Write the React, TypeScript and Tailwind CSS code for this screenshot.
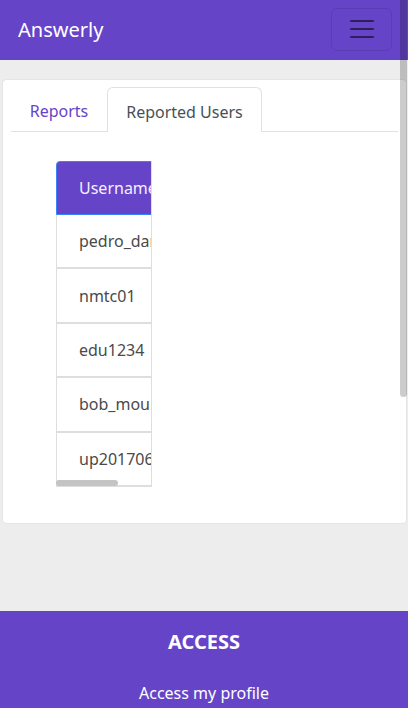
import React from "react";

const users = ["pedro_dantas", "nmtc01", "edu1234", "bob_mountain", "up201706000"];

const Navbar = () => (
  <nav className="h-[60px] shrink-0 bg-[#6644c8] flex items-center justify-between pl-[18px] pr-[16px]">
    <span className="text-white text-[20px] leading-none">Answerly</span>
    <button className="w-[61px] h-[43px] mt-[-2px] rounded-[6px] border border-black/10 flex items-center justify-center">
      <svg width="30" height="30" viewBox="0 0 30 30">
        <path d="M4 7h22M4 15h22M4 23h22" stroke="rgba(0,0,0,0.55)" strokeWidth="2" strokeLinecap="round" />
      </svg>
    </button>
  </nav>
);

const Tabs = () => (
  <div className="flex items-end border-b border-[#dee2e6] h-[45px]">
    <div className="w-[96px] h-[44px] pt-[3px] flex items-center justify-center text-[#6644c8] text-[16px]">Reports</div>
    <div className="w-[155px] h-[45px] pt-[3px] mb-[-1px] flex items-center justify-center text-[#495057] text-[16px] bg-white border border-b-0 border-[#dee2e6] rounded-t-[6px]">
      Reported Users
    </div>
  </div>
);

const UsersTable = () => (
  <div className="relative w-[96px] ml-[45px] mt-[29px] overflow-hidden">
    <div className="w-[160px]">
      <div className="h-[54px] bg-[#6644c8] border border-[#3b82f6] rounded-t-[4px] flex items-center pl-[22px] text-[16px] text-[#f4f0ff]">
        Username
      </div>
      {users.map((u, i) => (
        <div
          key={i}
          className="h-[54.4px] border-x border-b-2 border-[#dedede] flex items-center pl-[22px] text-[16px] text-[#4a4a4a] whitespace-nowrap"
        >
          {u}
        </div>
      ))}
    </div>
    <div className="absolute left-0 right-0 top-0 bottom-0 border-r border-[#dedede] pointer-events-none"></div>
    <div className="absolute left-0 bottom-[1px] w-[62px] h-[6px] rounded-full bg-[#c4c4c4]"></div>
  </div>
);

export default function App() {
  return (
    <div
      className="relative h-[708px] overflow-hidden bg-[#ededed] flex flex-col"
      style={{ fontFamily: '"Noto Sans", "Open Sans", sans-serif' }}
    >
      <Navbar />
      <div className="ml-[2px] mr-[1px] mt-[19px] h-[445px] shrink-0 bg-white border border-black/10 rounded-[5px] px-[8px] pt-[7px]">
        <Tabs />
        <UsersTable />
      </div>
      <footer className="mt-[87px] flex-1 bg-[#6644c8] flex flex-col items-center text-white">
        <h5 className="mt-[17px] text-[20px] font-bold leading-[28px]">ACCESS</h5>
        <a className="mt-[25px] text-[16px] leading-[24px]">Access my profile</a>
      </footer>
      <div className="absolute right-[1px] top-0 w-[7px] h-[397px] rounded-b-full bg-black/20"></div>
    </div>
  );
}
